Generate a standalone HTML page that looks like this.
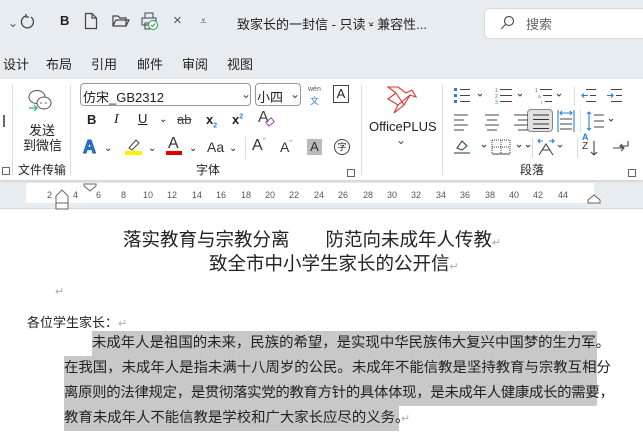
<!DOCTYPE html>
<html><head><meta charset="utf-8"><style>
*{margin:0;padding:0;box-sizing:border-box}
body{width:643px;height:441px;overflow:hidden;background:#e6ecf0;font-family:"Liberation Sans","Noto Sans CJK SC",sans-serif;color:#222;position:relative}
.a{position:absolute;white-space:nowrap}
.t{font-size:13px}
.s{font-size:12px}
.sep{position:absolute;width:1px;background:#dcdcdc}
.doc{font-family:"Liberation Sans","Noto Sans CJK SC",sans-serif}
.hl{background:#c8c8c8}
.rm{color:#aaa;font-size:11px}
</style></head><body>
<!-- title bar -->
<div class="a s" style="left:8px;top:16px;color:#555">⌄</div>
<svg class="a" style="left:20px;top:13px" width="16" height="18"><path d="M6 3 A6 6 0 1 0 11 4" fill="none" stroke="#444" stroke-width="1.3"/><path d="M6 1 L6 4 L9 4" fill="none" stroke="#444" stroke-width="1.3"/></svg>
<div class="a" style="left:60px;top:13px;font-weight:bold;font-size:13px">B</div>
<svg class="a" style="left:84px;top:12px" width="14" height="18"><path d="M1.5 1.5 H8 L12.5 6 V16.5 H1.5 Z M8 1.5 V6 H12.5" fill="none" stroke="#444" stroke-width="1.2"/></svg>
<svg class="a" style="left:112px;top:14px" width="18" height="14"><path d="M1 2 H6 L8 4 H14 V12 H1 Z M1 12 L4 6 H17 L14 12" fill="none" stroke="#444" stroke-width="1.2"/></svg>
<svg class="a" style="left:141px;top:11px" width="18" height="20"><rect x="4" y="2" width="8" height="5" fill="none" stroke="#444"/><rect x="1" y="7" width="14" height="7" fill="none" stroke="#444"/><rect x="4" y="12" width="8" height="6" fill="none" stroke="#444"/><circle cx="12" cy="14" r="4.5" fill="#fff" stroke="#2a9d4a"/><path d="M10 14 L11.5 15.5 L14 12.5" stroke="#2a9d4a" fill="none"/></svg>
<div class="a" style="left:173px;top:12px;font-size:15px;color:#555">×</div>
<div class="a s" style="left:200px;top:14px;color:#555">⩡</div>
<div class="a t" style="left:237px;top:14px;color:#222">致家长的一封信 - 只读 - 兼容性...</div>
<div class="a s" style="left:366px;top:14px;color:#555">⌄</div>
<div class="a" style="left:484px;top:8px;width:170px;height:31px;background:#fff;border:1px solid #d4d9dd;border-radius:5px"></div>
<svg class="a" style="left:499px;top:15px" width="16" height="16"><circle cx="10" cy="6" r="4.5" fill="none" stroke="#555" stroke-width="1.2"/><path d="M7 9 L2 14" stroke="#555" stroke-width="1.2"/></svg>
<div class="a t" style="left:526px;top:14px;color:#666">搜索</div>
<!-- tabs -->
<div class="a t" style="left:3px;top:54px">设计</div>
<div class="a t" style="left:46px;top:54px">布局</div>
<div class="a t" style="left:91px;top:54px">引用</div>
<div class="a t" style="left:137px;top:54px">邮件</div>
<div class="a t" style="left:182px;top:54px">审阅</div>
<div class="a t" style="left:227px;top:54px">视图</div>
<!-- ribbon -->
<div class="a" style="left:0;top:79px;width:643px;height:101px;background:#fff;box-shadow:0 1px 3px rgba(0,0,0,.15)"></div>
<div class="sep" style="left:12px;top:85px;height:90px"></div>
<div class="sep" style="left:70px;top:85px;height:90px"></div>
<div class="sep" style="left:361px;top:85px;height:90px"></div>
<div class="sep" style="left:442px;top:85px;height:90px"></div>
<div class="a" style="left:3px;top:115px;width:2px;height:12px;background:#666"></div>
<svg class="a" style="left:26px;top:88px" width="28" height="26"><ellipse cx="11" cy="9" rx="8" ry="6.5" fill="none" stroke="#555"/><ellipse cx="18" cy="15" rx="7" ry="6" fill="#fff" stroke="#555"/><circle cx="15" cy="15" r=".8" fill="#555"/><circle cx="20" cy="15" r=".8" fill="#555"/><path d="M3 20 H11 M8 17 L11 20 L8 23" stroke="#3a9" fill="none" stroke-width="1.2"/></svg>
<div class="a t" style="left:29px;top:120px">发送</div>
<div class="a t" style="left:23px;top:135px">到微信</div>
<div class="a s" style="left:18px;top:161px">文件传输</div>
<div class="a" style="left:2px;top:167px;width:8px;height:8px;border:1px solid #666"></div>
<!-- font group -->
<div class="a" style="left:80px;top:83px;width:171px;height:23px;border:1px solid #999;border-radius:4px"></div>
<div class="a t" style="left:83px;top:87px">仿宋_GB2312</div>
<div class="a s" style="left:241px;top:87px;color:#444">⌄</div>
<div class="a" style="left:255px;top:83px;width:46px;height:23px;border:1px solid #999;border-radius:4px"></div>
<div class="a t" style="left:257px;top:87px">小四</div>
<div class="a s" style="left:290px;top:87px;color:#444">⌄</div>
<div class="a" style="left:308px;top:86px;font-size:7px;color:#555">wén</div>
<div class="a" style="left:310px;top:94px;font-size:9px;color:#2a7fd4">文</div>
<div class="a" style="left:333px;top:85px;width:16px;height:18px;border:1px solid #444;font-size:13px;text-align:center;line-height:16px">A</div>
<div class="a" style="left:87px;top:112px;font-weight:bold;font-size:13px">B</div>
<div class="a" style="left:114px;top:112px;font-style:italic;font-size:14px;font-family:'Liberation Serif',serif">I</div>
<div class="a" style="left:138px;top:111px;text-decoration:underline;font-size:13px">U</div>
<div class="a" style="left:159px;top:114px;font-size:10px">⌄</div>
<div class="a" style="left:177px;top:112px;text-decoration:line-through;font-size:13px;color:#444">ab</div>
<div class="a" style="left:206px;top:112px;font-weight:bold;font-size:13px">x<sub style="font-size:7px;color:#2a7fd4">2</sub></div>
<div class="a" style="left:232px;top:112px;font-weight:bold;font-size:13px">x<sup style="font-size:7px;color:#2a7fd4">2</sup></div>
<div class="a" style="left:258px;top:109px;font-size:16px;color:#444">A</div>
<div class="a" style="left:266px;top:119px;width:8px;height:6px;border:1.5px solid #a040c0;transform:rotate(-40deg)"></div>
<div class="a" style="left:83px;top:137px;font-size:18px;font-weight:bold;color:#2a7fd4;-webkit-text-stroke:1px #1a5fa4">A</div>
<div class="a" style="left:104px;top:143px;font-size:10px">⌄</div>
<svg class="a" style="left:125px;top:137px" width="18" height="18"><path d="M4 11 L11 3 L14 6 L7 13 Z" fill="none" stroke="#444"/><rect x="0" y="14" width="17" height="4" fill="#ffef00"/></svg>
<div class="a" style="left:148px;top:143px;font-size:10px">⌄</div>
<div class="a" style="left:168px;top:135px;font-size:16px;color:#333">A</div>
<div class="a" style="left:166px;top:151px;width:16px;height:4px;background:#e00000"></div>
<div class="a" style="left:189px;top:143px;font-size:10px">⌄</div>
<div class="a" style="left:207px;top:139px;font-size:14px;color:#333">Aa</div>
<div class="a" style="left:229px;top:143px;font-size:10px">⌄</div>
<div class="sep" style="left:245px;top:137px;height:22px"></div>
<div class="a" style="left:252px;top:137px;font-size:16px;color:#333">A<span style="font-size:9px;vertical-align:top;color:#2a7fd4">ˆ</span></div>
<div class="a" style="left:280px;top:139px;font-size:14px;color:#333">A<span style="font-size:9px;vertical-align:top;color:#2a7fd4">ˇ</span></div>
<div class="a" style="left:307px;top:139px;width:15px;height:16px;background:#bbb;font-size:13px;text-align:center;line-height:16px;color:#333">A</div>
<div class="a" style="left:334px;top:139px;width:16px;height:16px;border:1px solid #444;border-radius:50%;font-size:9px;text-align:center;line-height:14px">字</div>
<div class="a s" style="left:196px;top:161px">字体</div>
<div class="a" style="left:347px;top:169px;width:8px;height:8px;border:1px solid #666"></div>
<!-- OfficePLUS -->
<svg class="a" style="left:386px;top:85px" width="32" height="30"><path d="M2 2 L10 8 L2 14 L12 20 L8 28 L18 20 L24 10 L30 12 L26 5 L20 8 L12 2 Z M10 8 L18 20 M12 20 L24 10" fill="none" stroke="#e03030" stroke-width="1.1"/></svg>
<div class="a t" style="left:369px;top:119px">OfficePLUS</div>
<div class="a s" style="left:396px;top:133px;color:#444">⌄</div>
<!-- paragraph -->
<div class="a" style="left:527px;top:109px;width:26px;height:23px;background:#e2e2e2;border:1px solid #888;border-radius:4px"></div>
<svg class="a" style="left:452px;top:86px" width="190" height="80" fill="none" stroke="#444" stroke-width="1.1">
<rect x="2" y="2" width="3" height="3" fill="#2a7fd4" stroke="none"/><rect x="2" y="8" width="3" height="3" fill="#2a7fd4" stroke="none"/><rect x="2" y="14" width="3" height="3" fill="#2a7fd4" stroke="none"/>
<path d="M8 3.5 H18 M8 9.5 H18 M8 15.5 H18"/><path d="M26 8 L28 10 L30 8"/>
<text x="43" y="6" font-size="5" fill="#2a7fd4" stroke="none">1</text><text x="43" y="12" font-size="5" fill="#2a7fd4" stroke="none">2</text><text x="43" y="18" font-size="5" fill="#2a7fd4" stroke="none">3</text>
<path d="M48 3.5 H60 M48 9.5 H60 M48 15.5 H60"/><path d="M66 8 L68 10 L70 8"/>
<text x="83" y="6" font-size="5" fill="#2a7fd4" stroke="none">1</text><text x="86" y="12" font-size="5" fill="#2a7fd4" stroke="none">a</text><text x="89" y="18" font-size="5" fill="#2a7fd4" stroke="none">i</text>
<path d="M88 3.5 H100 M91 9.5 H100 M93 15.5 H100"/><path d="M105 8 L107 10 L109 8"/>
<path d="M134 3.5 H144 M138 9.5 H144 M134 15.5 H144"/><path d="M130 9.5 H136 M132 7.5 L130 9.5 L132 11.5" stroke="#2a7fd4"/>
<path d="M159 3.5 H170 M164 9.5 H170 M159 15.5 H170"/><path d="M155 9.5 H161 M159 7.5 L161 9.5 L159 11.5" stroke="#2a7fd4"/>
<path d="M2 29 H16 M2 34 H12 M2 39 H16 M2 44 H12"/>
<path d="M33 29 H47 M35 34 H45 M33 39 H47 M35 44 H45"/>
<path d="M62 29 H76 M66 34 H76 M62 39 H76 M66 44 H76"/>
<path d="M81 29 H97 M81 33.5 H97 M81 38 H97 M81 42.5 H97" stroke="#333"/>
<path d="M106 24 V46 M122 24 V46" stroke="#2a7fd4"/>
<path d="M108 27 H120 M110 25 L108 27 L110 29 M118 25 L120 27 L118 29" stroke="#2a7fd4"/>
<path d="M108 33 H120 M108 38 H120 M108 43 H120"/>
<path d="M142 29 H152 M142 35 H152 M142 41 H152"/>
<path d="M137 26 V44 M135 28 L137 26 L139 28 M135 42 L137 44 L139 42" stroke="#2a7fd4"/><path d="M157 33 L159 35 L161 33"/>
<path d="M2 67 H18"/><path d="M5 62 L10 55 L15 60 L10 64 Z"/><path d="M14 58 V61" stroke="#2a7fd4"/>
<path d="M30 59 L32 61 L34 59"/>
<path d="M74 59 L76 61 L78 59"/>
<path d="M40 54 H58 M40 54 V68 M58 54 V68" stroke-dasharray="1 1"/><path d="M40 68 H58"/><path d="M49 54 V68 M40 61 H58" stroke-dasharray="1 1"/>
<path d="M65 59 L67 61 L69 59"/>
<path d="M87 69 L94 58 L101 69 M90 64 H98"/><path d="M86 55 H91 M97 55 H102 M88 53 L86 55 L88 57 M100 53 L102 55 L100 57" stroke="#2a7fd4"/><path d="M106 59 L108 61 L110 59"/>
<path d="M142 55 V69 M139 66 L142 69 L145 66"/>
<path d="M161 62 H172 M169 59 L172 62 L169 65 M176 55 V60 H168 M170 58 L168 60 L170 62"/>
</svg>
<div class="a" style="left:582px;top:133px;font-size:9px;font-weight:bold;color:#2a7fd4;line-height:9px">A</div>
<div class="a" style="left:582px;top:142px;font-size:10px;color:#333;line-height:10px">Z</div>
<div class="sep" style="left:532px;top:138px;height:20px"></div>
<div class="sep" style="left:577px;top:138px;height:20px"></div>
<div class="sep" style="left:574px;top:86px;height:20px"></div>
<div class="sep" style="left:580px;top:110px;height:22px"></div>
<div class="a s" style="left:520px;top:161px">段落</div>
<div class="a" style="left:628px;top:169px;width:8px;height:8px;border:1px solid #666"></div>
<!-- ruler -->
<div class="a" style="left:26px;top:183px;width:568px;height:20px;background:#fff"></div>
<div class="a" style="left:0;top:208px;width:643px;height:233px;background:#fff;border-top:1px solid #d8d8d8"></div>
<div class="a" style="left:0;top:190px;font-size:9px;color:#555">
<span class="a" style="left:47px">2</span><span class="a" style="left:73px">4</span><span class="a" style="left:96px">6</span><span class="a" style="left:121px">8</span><span class="a" style="left:143px">10</span><span class="a" style="left:167px">12</span><span class="a" style="left:192px">14</span><span class="a" style="left:216px">16</span><span class="a" style="left:241px">18</span><span class="a" style="left:265px">20</span><span class="a" style="left:289px">22</span><span class="a" style="left:314px">24</span><span class="a" style="left:338px">26</span><span class="a" style="left:363px">28</span><span class="a" style="left:387px">30</span><span class="a" style="left:411px">32</span><span class="a" style="left:436px">34</span><span class="a" style="left:460px">36</span><span class="a" style="left:485px">38</span><span class="a" style="left:509px">40</span><span class="a" style="left:533px">42</span><span class="a" style="left:558px">44</span></div>
<svg class="a" style="left:55px;top:183px" width="15" height="27"><path d="M1 13 L7 7 L13 13 V20 H1 Z M1 20 V26 H13 V20" fill="#fff" stroke="#666"/></svg>
<svg class="a" style="left:83px;top:183px" width="15" height="9"><path d="M1 1 H13 V3 L7 8 L1 3 Z" fill="#fff" stroke="#666"/></svg>
<svg class="a" style="left:587px;top:194px" width="15" height="10"><path d="M1 9 V6 L7 1 L13 6 V9 Z" fill="#fff" stroke="#666"/></svg>
<!-- document -->
<div class="a doc" style="left:123px;top:229px;font-size:18.5px;line-height:22px">落实教育与宗教分离<span style="display:inline-block;width:36px"></span>防范向未成年人传教<span class="rm">↵</span></div>
<div class="a doc" style="left:209px;top:253px;font-size:18.5px;line-height:22px">致全市中小学生家长的公开信<span class="rm">↵</span></div>
<div class="a rm" style="left:55px;top:285px">↵</div>
<div class="a doc" style="left:27px;top:312px;font-size:13px">各位学生家长：<span class="rm">↵</span></div>
<div class="a doc hl" style="left:92px;top:331px;width:505px;height:25px;font-size:14.4px;line-height:25px">未成年人是祖国的未来，民族的希望，是实现中华民族伟大复兴中国梦的生力军。</div>
<div class="a doc hl" style="left:64px;top:356px;width:533px;height:25px;font-size:14.4px;line-height:25px">在我国，未成年人是指未满十八周岁的公民。未成年不能信教是坚持教育与宗教互相分</div>
<div class="a doc hl" style="left:64px;top:381px;width:533px;height:25px;font-size:14.4px;line-height:25px;letter-spacing:-0.3px">离原则的法律规定，是贯彻落实党的教育方针的具体体现，是未成年人健康成长的需要，</div>
<div class="a doc hl" style="left:64px;top:406px;width:335px;height:25px;font-size:14.4px;line-height:25px">教育未成年人不能信教是学校和广大家长应尽的义务。</div>
<div class="a rm" style="left:401px;top:412px">↵</div>
</body></html>
